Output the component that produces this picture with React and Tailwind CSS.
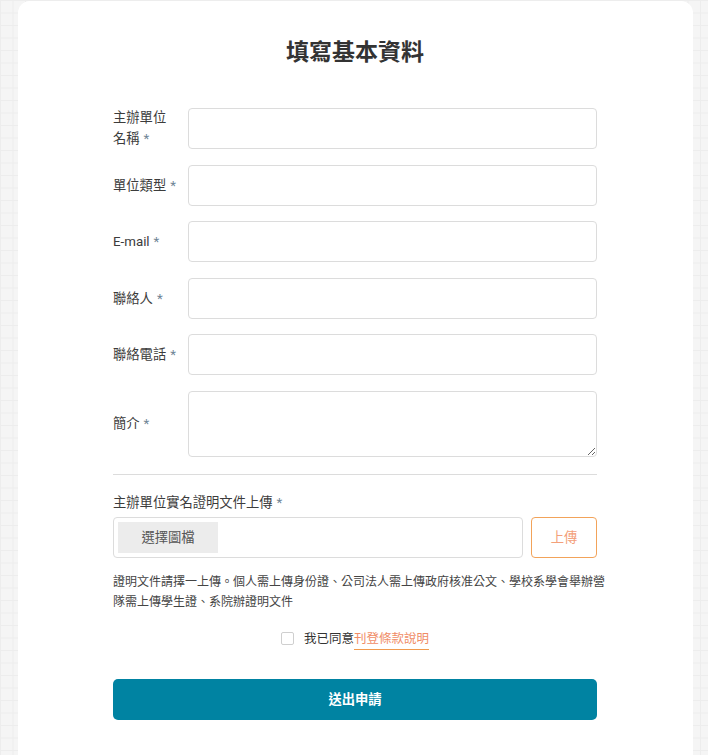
import React from "react";

const font = { fontFamily: 'Roboto, "Noto Sans CJK TC", "Noto Sans", sans-serif' };

function Star() {
  return <span className="ml-[4px] text-[#6f8596]">*</span>;
}

function Row({ label, children, className = "" }) {
  return (
    <div className={"flex items-center " + className}>
      <div className="w-[75px] shrink-0 text-[13.3px] leading-[21px] text-[#3c3c3c]">{label}</div>
      {children}
    </div>
  );
}

export default function App() {
  const inputCls =
    "flex-1 h-[41px] border border-[#dcdcdc] rounded-[4px] bg-white outline-none px-3 text-[13.3px]";
  return (
    <div
      className="min-h-screen bg-[#f5f5f5] bg-[linear-gradient(#ededed_1px,transparent_1px),linear-gradient(90deg,#ededed_1px,transparent_1px)] bg-size-[12.5px_12.5px] pt-[1px] overflow-hidden"
      style={font}
    >
      <div className="ml-[18px] w-[675px] bg-white rounded-[12px] pt-[35px] pb-[60px] min-h-[820px]">
        <div className="w-[484px] ml-[95px]">
          <h1 className="text-center text-[23px] leading-[33px] font-bold text-[#333]">填寫基本資料</h1>

          <div className="mt-[38px] flex flex-col gap-[15.6px]">
            <Row
              label={
                <>
                  主辦單位
                  <br />
                  名稱<Star />
                </>
              }
            >
              <input className={inputCls} />
            </Row>
            <Row label={<span className="whitespace-nowrap">單位類型<Star /></span>}>
              <input className={inputCls} />
            </Row>
            <Row label={<span className="whitespace-nowrap">E-mail<Star /></span>}>
              <input className={inputCls} />
            </Row>
            <Row label={<span className="whitespace-nowrap">聯絡人<Star /></span>}>
              <input className={inputCls} />
            </Row>
            <Row label={<span className="whitespace-nowrap">聯絡電話<Star /></span>}>
              <input className={inputCls} />
            </Row>
            <Row label={<span className="whitespace-nowrap">簡介<Star /></span>}>
              <textarea className="flex-1 h-[66px] border border-[#dcdcdc] rounded-[4px] bg-white outline-none px-3 py-2 text-[13.3px] resize-y block" />
            </Row>
          </div>

          <div className="mt-[17px] border-t border-[#dcdcdc]" />

          <div className="mt-[17px] text-[13.3px] leading-[21px] text-[#3c3c3c]">
            主辦單位實名證明文件上傳<Star />
          </div>

          <div className="mt-[4px] flex gap-[8px]">
            <div className="flex-1 h-[41px] border border-[#dcdcdc] rounded-[4px] p-[4px]">
              <div className="w-[100px] h-full bg-[#ececec] flex items-center justify-center text-[13.3px] text-[#555]">
                選擇圖檔
              </div>
            </div>
            <button className="w-[66px] h-[41px] border border-[#f2a35a] rounded-[4px] text-[13.3px] text-[#f3a07a] bg-white">
              上傳
            </button>
          </div>

          <p className="mt-[14px] text-[12px] leading-[20px] text-[#444] whitespace-nowrap">
            證明文件請擇一上傳。個人需上傳身份證、公司法人需上傳政府核准公文、學校系學會舉辦營
            <br />
            隊需上傳學生證、系院辦證明文件
          </p>

          <div className="mt-[16px] flex justify-center items-center">
            <span className="w-[13px] h-[13px] border border-[#cfcfcf] rounded-[2px] bg-white shrink-0" />
            <span className="ml-[10px] text-[12.5px] leading-[21px] text-[#333]">我已同意</span>
            <span className="inline-block text-[12.5px] leading-[21px] text-[#f08c66] border-b border-[#f09a4e]">
              刊登條款說明
            </span>
          </div>

          <button className="mt-[29px] w-full h-[41px] rounded-[5px] bg-[#0083a2] text-white font-bold text-[13.3px]">
            送出申請
          </button>
        </div>
      </div>
    </div>
  );
}
